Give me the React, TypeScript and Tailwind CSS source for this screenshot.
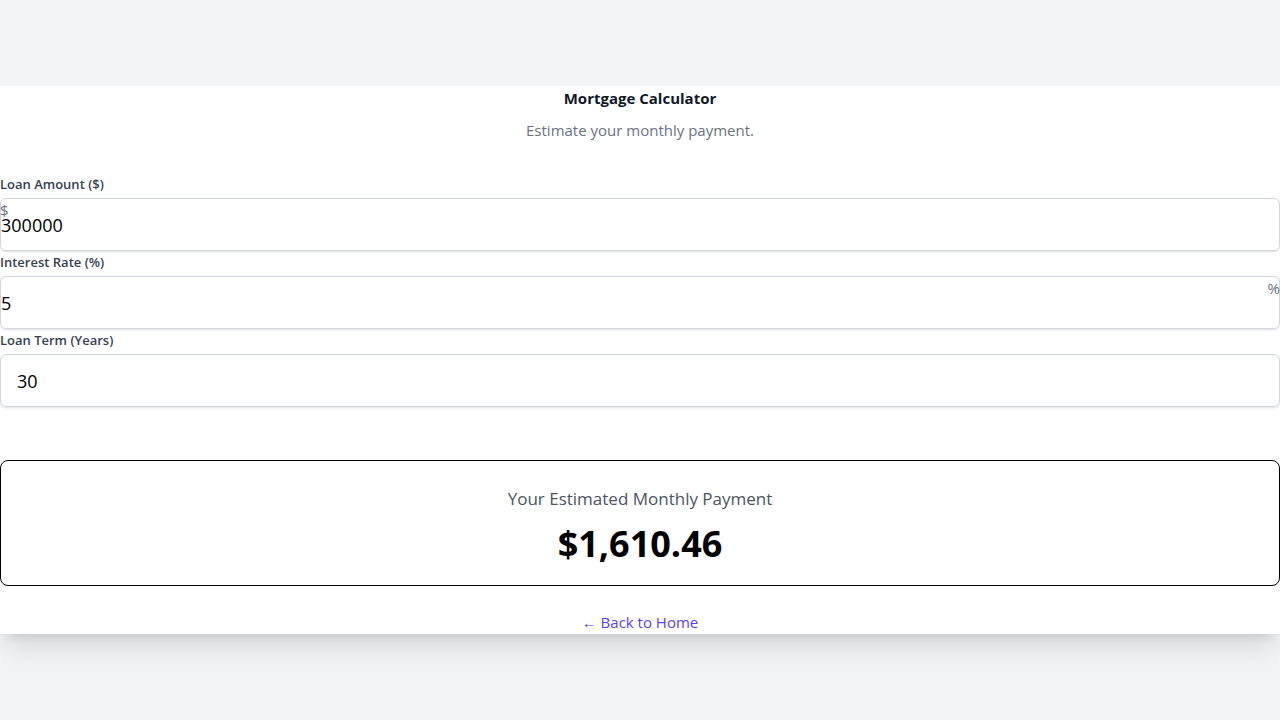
import { useState } from "react";

export default function App() {
  const [amount, setAmount] = useState("300000");
  const [rate, setRate] = useState("5");
  const [years, setYears] = useState("30");

  const p = parseFloat(amount) || 0;
  const r = (parseFloat(rate) || 0) / 100 / 12;
  const n = (parseFloat(years) || 0) * 12;
  const monthly = r === 0 ? (n ? p / n : 0) : (p * r * Math.pow(1 + r, n)) / (Math.pow(1 + r, n) - 1);
  const payment = monthly.toLocaleString("en-US", {
    minimumFractionDigits: 2,
    maximumFractionDigits: 2,
  });

  return (
    <div
      className="min-h-screen bg-gray-100 pt-[86px]"
      style={{ fontFamily: '"Open Sans", "Noto Sans", sans-serif' }}
    >
      <div className="bg-white shadow-xl">
        {/* Header */}
        <h1 className="text-center text-[15px] leading-6 font-bold text-gray-900">
          Mortgage Calculator
        </h1>
        <p className="mt-2 text-center text-[15px] leading-6 text-gray-500">
          Estimate your monthly payment.
        </p>

        {/* Inputs */}
        <div className="mt-8 flex flex-col gap-px">
          <div>
            <label className="mb-1 block text-[13px] leading-5 font-semibold text-gray-700">
              Loan Amount ($)
            </label>
            <div className="relative">
              <span className="absolute left-0 top-[2px] text-[15px] leading-5 text-gray-500">$</span>
              <input
                type="text"
                value={amount}
                onChange={(e) => setAmount(e.target.value)}
                className="block h-[53px] w-full rounded-md border border-gray-300 text-lg text-black shadow-sm outline-none"
              />
            </div>
          </div>

          <div>
            <label className="mb-1 block text-[13px] leading-5 font-semibold text-gray-700">
              Interest Rate (%)
            </label>
            <div className="relative">
              <input
                type="text"
                value={rate}
                onChange={(e) => setRate(e.target.value)}
                className="block h-[53px] w-full rounded-md border border-gray-300 text-lg text-black shadow-sm outline-none"
              />
              <span className="absolute right-0 top-[2px] text-[15px] leading-5 text-gray-500">%</span>
            </div>
          </div>

          <div>
            <label className="mb-1 block text-[13px] leading-5 font-semibold text-gray-700">
              Loan Term (Years)
            </label>
            <input
              type="text"
              value={years}
              onChange={(e) => setYears(e.target.value)}
              className="block h-[53px] w-full rounded-md border border-gray-300 px-4 text-lg text-black shadow-sm outline-none"
            />
          </div>
        </div>

        {/* Result */}
        <div className="mt-[53px] rounded-lg border border-black pt-6 pb-[21px] text-center">
          <p className="text-[17px] leading-7 text-gray-600">Your Estimated Monthly Payment</p>
          <p className="mt-[11px] text-4xl leading-10 font-bold text-black">${payment}</p>
        </div>

        <div className="mt-6 text-center">
          <a href="#" className="text-[15px] leading-6 text-[#5b3ff0]">
            ← Back to Home
          </a>
        </div>
      </div>
    </div>
  );
}
